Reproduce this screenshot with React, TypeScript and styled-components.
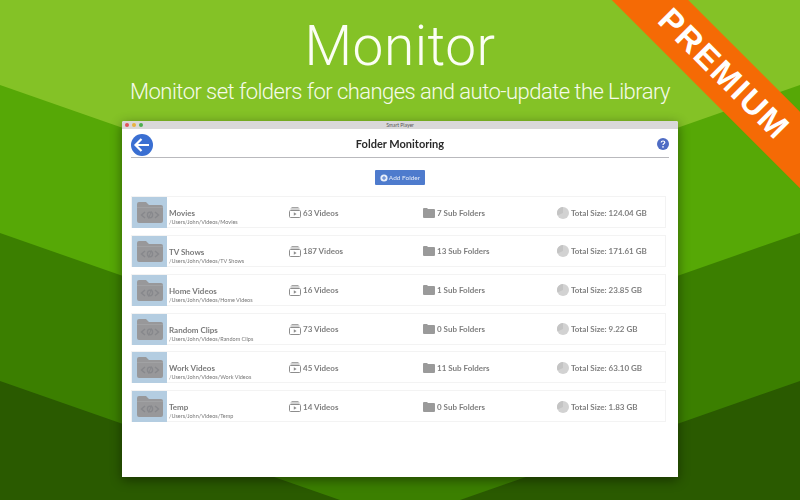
import styled, { createGlobalStyle } from "styled-components"

const GlobalStyle = createGlobalStyle`
  html, body {
    margin: 0;
    padding: 0;
  }
  body {
    font-family: "Lato", "Liberation Sans", sans-serif;
  }
`

const folders = [
  { name: "Movies", path: "/Users/John/Videos/Movies", videos: 63, subs: 7, size: "124.04" },
  { name: "TV Shows", path: "/Users/John/Videos/TV Shows", videos: 187, subs: 13, size: "171.61" },
  { name: "Home Videos", path: "/Users/John/Videos/Home Videos", videos: 16, subs: 1, size: "23.85" },
  { name: "Random Clips", path: "/Users/John/Videos/Random Clips", videos: 73, subs: 0, size: "9.22" },
  { name: "Work Videos", path: "/Users/John/Videos/Work Videos", videos: 45, subs: 11, size: "63.10" },
  { name: "Temp", path: "/Users/John/Videos/Temp", videos: 14, subs: 0, size: "1.83" },
]

const Page = styled.div`
  position: relative;
  width: 800px;
  height: 500px;
  overflow: hidden;
  display: flex;
  flex-direction: column;
  align-items: center;
  background: #84c226;
`

const Backdrop = styled.svg`
  position: absolute;
  top: 0;
  left: 0;
`

const Title = styled.h1`
  position: relative;
  margin: 15px 0 0;
  font-family: "Roboto", "Liberation Sans", sans-serif;
  font-size: 55px;
  font-weight: 300;
  letter-spacing: 0.5px;
  line-height: 62px;
  color: #fbfef4;
`

const Subtitle = styled.h2`
  position: relative;
  margin: 1px 0 15px;
  font-family: "Roboto", "Liberation Sans", sans-serif;
  font-size: 22px;
  font-weight: 300;
  letter-spacing: -0.54px;
  line-height: 28px;
  color: #f6fbea;
`

const Ribbon = styled.div`
  position: absolute;
  top: 47px;
  left: 574px;
  width: 300px;
  height: 54px;
  transform: rotate(45deg);
  background: #f56a05;
  color: #fff;
  font-family: "Liberation Sans", sans-serif;
  font-size: 33px;
  font-weight: 700;
  letter-spacing: 2px;
  line-height: 54px;
  text-align: center;
`

const Window = styled.div`
  position: relative;
  width: 556px;
  height: 356px;
  background: #fff;
  border-radius: 2px 2px 0 0;
  box-shadow: 0 3px 12px rgba(0, 0, 0, 0.45);
  display: flex;
  flex-direction: column;
`

const TitleBar = styled.div`
  position: relative;
  height: 8px;
  flex: none;
  background: #d9d8d9;
  border-radius: 2px 2px 0 0;
  display: flex;
  align-items: center;
  justify-content: center;
  font-size: 5px;
  color: #555;
`

const Lights = styled.div`
  position: absolute;
  left: 3px;
  top: 2px;
  display: flex;
  gap: 3px;
`

const Light = styled.span<{ $color: string }>`
  width: 4px;
  height: 4px;
  border-radius: 50%;
  background: ${(p) => p.$color};
`

const Content = styled.div`
  flex: 1;
  padding: 3px 9px 0;
  display: flex;
  flex-direction: column;
  filter: blur(0.3px);
`

const Header = styled.header`
  height: 25px;
  border-bottom: 1px solid #b9b9bd;
  display: grid;
  grid-template-columns: 1fr auto 1fr;
  align-items: center;
  margin-bottom: 12px;
`

const HeaderTitle = styled.div`
  font-size: 11px;
  font-weight: 700;
  line-height: 14px;
  margin-bottom: 2px;
  color: #2b2b2b;
`

const HelpSlot = styled.div`
  display: flex;
  justify-content: flex-end;
  height: 12px;
  margin-bottom: 2px;
`

const AddRow = styled.div`
  display: flex;
  justify-content: center;
  margin-bottom: 11px;
`

const AddButton = styled.button`
  width: 50px;
  height: 15px;
  padding: 0;
  border: 0;
  border-radius: 1px;
  background: #4e7bcd;
  color: #e4ebf8;
  font-family: inherit;
  font-size: 6.5px;
  display: flex;
  align-items: center;
  justify-content: center;
  gap: 1px;
`

const List = styled.div`
  width: 535px;
  display: flex;
  flex-direction: column;
  gap: 6.87px;
`

const Row = styled.div`
  height: 32px;
  box-sizing: border-box;
  border: 1px solid #f3f3f3;
  display: grid;
  grid-template-columns: 157px 134px 134px 1fr;
  align-items: center;
`

const NameCell = styled.div`
  display: flex;
  align-items: flex-end;
  height: 100%;
`

const Tile = styled.div`
  width: 35px;
  height: 31px;
  flex: none;
  background: #b4cde1;
  display: flex;
  align-items: center;
  justify-content: center;
`

const Names = styled.div`
  margin-left: 2px;
  padding-bottom: 2px;
  display: flex;
  flex-direction: column;
`

const Name = styled.div`
  font-size: 8px;
  font-weight: 700;
  line-height: 10px;
  color: #7a7a7a;
`

const Path = styled.div`
  font-size: 5.5px;
  line-height: 8px;
  color: #777;
  white-space: nowrap;
`

const Stat = styled.div`
  display: flex;
  align-items: center;
  gap: 2px;
  font-size: 8px;
  font-weight: 700;
  color: #7f7f7f;
  white-space: nowrap;
`

const IconSlot = styled.span`
  width: 12px;
  height: 12px;
  display: flex;
  align-items: center;
  justify-content: center;
`

const BackIcon = () => (
  <svg width="22" height="22" viewBox="0 0 22 22">
    <circle cx="11" cy="11" r="11" fill="#3a6fd2" />
    <path d="M18 11H5M10.5 5L4.5 11L10.5 17" fill="none" stroke="#fff" strokeWidth="2.2" />
  </svg>
)

const HelpIcon = () => (
  <svg width="12" height="12" viewBox="0 0 12 12">
    <circle cx="6" cy="6" r="6" fill="#4f6cc4" />
    <path d="M4.2 4.6C4.2 3.5 5 3 6 3C7 3 7.8 3.6 7.8 4.5C7.8 5.6 6 5.6 6 7" fill="none" stroke="#fff" strokeWidth="1.2" />
    <circle cx="6" cy="8.9" r="0.8" fill="#fff" />
  </svg>
)

const PlusIcon = () => (
  <svg width="8" height="8" viewBox="0 0 8 8">
    <circle cx="4" cy="4" r="3.6" fill="#e8eef9" />
    <path d="M4 2V6M2 4H6" stroke="#4e7bcd" strokeWidth="1" />
  </svg>
)

const FolderCodeIcon = () => (
  <svg width="26" height="21" viewBox="0 0 26 21">
    <path d="M2 0H9L12 3H24A2 2 0 0 1 26 5V19A2 2 0 0 1 24 21H2A2 2 0 0 1 0 19V2A2 2 0 0 1 2 0Z" fill="#98989a" />
    <path d="M0 5.5H26" stroke="#a8a9ab" strokeWidth="0.6" />
    <path d="M8 10L4.5 13L8 16M18 10L21.5 13L18 16" fill="none" stroke="#87888c" strokeWidth="1.5" />
    <ellipse cx="13" cy="13" rx="2.6" ry="2.8" fill="none" stroke="#87888c" strokeWidth="1.3" />
    <path d="M14.5 9.5L11.5 16.5" stroke="#87888c" strokeWidth="1" />
  </svg>
)

const VideosIcon = () => (
  <svg width="12" height="11" viewBox="0 0 12 11">
    <path d="M2.5 0.5H9.5M1.5 2H10.5" stroke="#8d8d8d" strokeWidth="0.8" />
    <rect x="0.5" y="3.5" width="11" height="7" rx="1" fill="none" stroke="#8d8d8d" />
    <path d="M4.8 5.2L7.6 7L4.8 8.8Z" fill="#8d8d8d" />
  </svg>
)

const SubFolderIcon = () => (
  <svg width="12" height="10" viewBox="0 0 12 10">
    <path d="M0 1A1 1 0 0 1 1 0H4L5 1H11A1 1 0 0 1 12 2V9A1 1 0 0 1 11 10H1A1 1 0 0 1 0 9Z" fill="#9a9a9a" />
  </svg>
)

const SizeIcon = () => (
  <svg width="12" height="12" viewBox="0 0 12 12">
    <circle cx="6" cy="6" r="6" fill="#d2d2d2" />
    <path d="M6 6L6 0A6 6 0 0 0 0.6 8.6Z" fill="#c4c4c4" />
  </svg>
)

const App = () => {
  return (
    <Page>
      <GlobalStyle />
      <Backdrop width="800" height="500" viewBox="0 0 800 500">
        <path d="M0 85L400 225L800 85V500H0Z" fill="#56a806" />
        <path d="M0 233L400 373L800 233V500H0Z" fill="#3b7f00" />
        <path d="M0 381L400 521L800 381V500H0Z" fill="#2a5a00" />
      </Backdrop>
      <Title>Monitor</Title>
      <Subtitle>Monitor set folders for changes and auto-update the Library</Subtitle>
      <Window>
        <TitleBar>
          <Lights>
            <Light $color="#e0545a" />
            <Light $color="#e8b33f" />
            <Light $color="#4cae4f" />
          </Lights>
          Smart Player
        </TitleBar>
        <Content>
          <Header>
            <BackIcon />
            <HeaderTitle>Folder Monitoring</HeaderTitle>
            <HelpSlot>
              <HelpIcon />
            </HelpSlot>
          </Header>
          <AddRow>
            <AddButton>
              <PlusIcon />
              Add Folder
            </AddButton>
          </AddRow>
          <List>
            {folders.map((folder) => (
              <Row key={folder.name}>
                <NameCell>
                  <Tile>
                    <FolderCodeIcon />
                  </Tile>
                  <Names>
                    <Name>{folder.name}</Name>
                    <Path>{folder.path}</Path>
                  </Names>
                </NameCell>
                <Stat>
                  <IconSlot><VideosIcon /></IconSlot>
                  {folder.videos} Videos
                </Stat>
                <Stat>
                  <IconSlot><SubFolderIcon /></IconSlot>
                  {folder.subs} Sub Folders
                </Stat>
                <Stat>
                  <IconSlot><SizeIcon /></IconSlot>
                  Total Size: {folder.size} GB
                </Stat>
              </Row>
            ))}
          </List>
        </Content>
      </Window>
      <Ribbon>PREMIUM</Ribbon>
    </Page>
  )
}

export default App
